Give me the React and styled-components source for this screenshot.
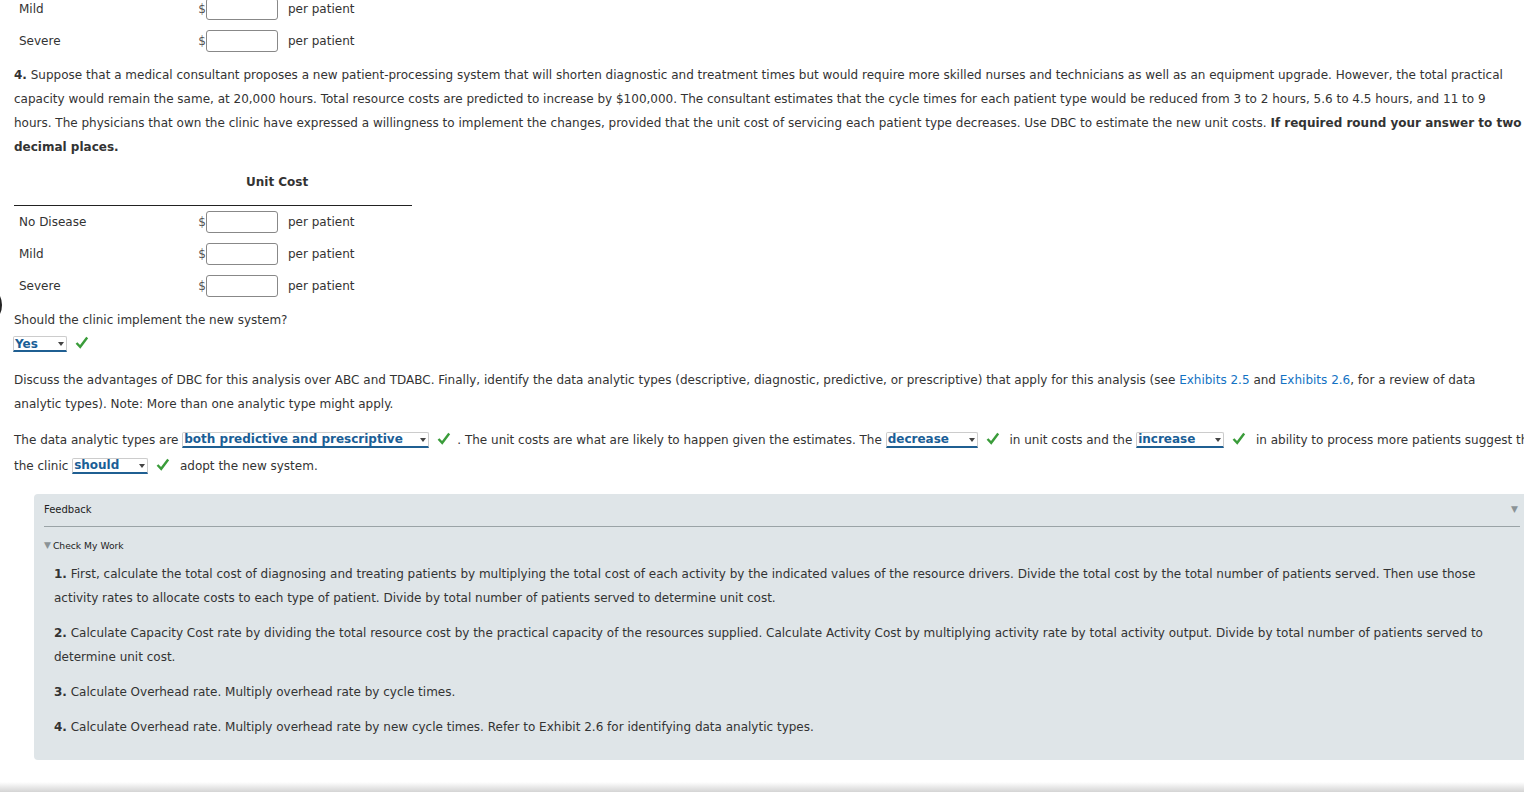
import React from 'react'
import styled, { createGlobalStyle } from 'styled-components'

const GlobalStyle = createGlobalStyle`
  html, body {
    margin: 0;
    padding: 0;
    background: #fff;
    overflow: hidden;
  }
  body {
    font-family: "DejaVu Sans", Verdana, sans-serif;
    font-size: 12px;
    color: #333;
  }
`

const Page = styled.div`
  width: 1560px;
  padding-left: 14px;
  position: relative;
`

const CostTable = styled.div`
  width: 398px;
  margin-top: ${props => props.$top || '0'};
`

const TableHead = styled.div`
  margin-top: 11px;
  padding-bottom: 11px;
  border-bottom: 1px solid #222;
  line-height: 24px;
  font-weight: bold;
  padding-left: 232px;
`

const Row = styled.div`
  display: flex;
  align-items: center;
  height: 32px;
`

const Label = styled.div`
  width: 178px;
  padding-left: 5px;
`

const Dollar = styled.span`
  width: 9px;
  text-align: right;
  color: #555;
`

const CostInput = styled.div`
  width: 70px;
  height: 20px;
  border: 1px solid #888;
  border-radius: 3px;
  background: #fff;
`

const Per = styled.span`
  margin-left: 10px;
`

const Para = styled.p`
  margin: ${props => props.$margin || '0'};
  line-height: ${props => props.$lh || '24px'};
  width: 1560px;
  white-space: nowrap;
`

const Question = styled.div`
  margin-top: 6px;
  line-height: 24px;
`

const Select = styled.span`
  display: inline-flex;
  align-items: center;
  justify-content: space-between;
  box-sizing: border-box;
  width: ${props => props.$w}px;
  height: 16px;
  padding: 0 2px 0 1px;
  background: #fff;
  border: 1px solid #ccc;
  border-bottom: 2px solid #1f5f92;
  border-radius: 2px 2px 0 0;
  color: #1a5e96;
  font-weight: bold;
  line-height: 14px;
  white-space: nowrap;
  vertical-align: 1px;
`

const Caret = styled.span`
  width: 0;
  height: 0;
  border-left: 3px solid transparent;
  border-right: 3px solid transparent;
  border-top: 4px solid #444;
  margin-top: 1px;
`

const CheckWrap = styled.span`
  display: inline-block;
  vertical-align: -1px;
  margin: 0 6px 0 8px;
`

const Link = styled.a`
  color: #1372c3;
  text-decoration: none;
`

const YesLine = styled.div`
  display: flex;
  align-items: center;
  height: 24px;
  margin-left: -1px;
`

const Feedback = styled.div`
  margin: 14px 0 0 20px;
  background: #dfe5e8;
  border-radius: 4px 0 0 4px;
  padding: 8px 0 21px 10px;
  width: 1500px;
`

const FeedbackHead = styled.div`
  display: flex;
  justify-content: space-between;
  font-size: 10px;
  line-height: 15px;
  padding-bottom: 9px;
  border-bottom: 1px solid #9aa3a6;
  width: 1476px;
  color: #222;
`

const Tri = styled.span`
  color: #8b9396;
  font-size: 9px;
  padding-right: 2px;
`

const CheckWork = styled.div`
  font-size: 9.2px;
  line-height: 15px;
  margin-top: 11px;
  color: #222;
  display: flex;
  align-items: center;
`

const Hint = styled.p`
  margin: ${props => props.$first ? '9px' : '11px'} 0 0 10px;
  line-height: 24px;
  width: 1440px;
`

const Circle = styled.div`
  position: absolute;
  left: -40px;
  top: 291px;
  width: 38px;
  height: 38px;
  border: 2px solid #222;
  border-radius: 50%;
`

const BottomShade = styled.div`
  position: fixed;
  left: 0;
  right: 0;
  bottom: 0;
  height: 10px;
  background: linear-gradient(#fff, #d4d4d4);
`

const Check = () => (
  <CheckWrap>
    <svg width="14" height="13" viewBox="0 0 14 13">
      <path d="M1.5 7 L5.2 10.8 L12.2 1.5" fill="none" stroke="#3a9c3a" strokeWidth="2.4" />
    </svg>
  </CheckWrap>
)

const Drop = ({ w, children }) => (
  <Select $w={w}>
    <span>{children}</span>
    <Caret />
  </Select>
)

const CostRow = ({ label }) => (
  <Row>
    <Label>{label}</Label>
    <Dollar>$</Dollar>
    <CostInput />
    <Per>per patient</Per>
  </Row>
)

export default function App() {
  return (
    <>
      <GlobalStyle />
      <Page>
        <Circle />
        <CostTable $top="-7px">
          <CostRow label="Mild" />
          <CostRow label="Severe" />
        </CostTable>

        <Para $margin="6px 0 0">
          <b>4.</b> Suppose that a medical consultant proposes a new patient-processing system that will shorten diagnostic and treatment times but would require more skilled nurses and technicians as well as an equipment upgrade. However, the total practical<br />
          capacity would remain the same, at 20,000 hours. Total resource costs are predicted to increase by $100,000. The consultant estimates that the cycle times for each patient type would be reduced from 3 to 2 hours, 5.6 to 4.5 hours, and 11 to 9<br />
          hours. The physicians that own the clinic have expressed a willingness to implement the changes, provided that the unit cost of servicing each patient type decreases. Use DBC to estimate the new unit costs. <b>If required round your answer to two</b><br />
          <b>decimal places.</b>
        </Para>

        <CostTable>
          <TableHead>Unit Cost</TableHead>
          <CostRow label="No Disease" />
          <CostRow label="Mild" />
          <CostRow label="Severe" />
        </CostTable>

        <Question>Should the clinic implement the new system?</Question>
        <YesLine>
          <Drop w={54}>Yes</Drop>
          <Check />
        </YesLine>

        <Para $margin="12px 0 0">
          Discuss the advantages of DBC for this analysis over ABC and TDABC. Finally, identify the data analytic types (descriptive, diagnostic, predictive, or prescriptive) that apply for this analysis (see <Link>Exhibits 2.5</Link> and <Link>Exhibits 2.6</Link>, for a review of data<br />
          analytic types). Note: More than one analytic type might apply.
        </Para>

        <Para $margin="12px 0 0" $lh="25px">
          The data analytic types are <Drop w={247}>both predictive and prescriptive</Drop><Check />. The unit costs are what are likely to happen given the estimates. The <Drop w={92}>decrease</Drop><Check /> in unit costs and the <Drop w={88}>increase</Drop><Check /> in ability to process more patients suggest that<br />
          the clinic <Drop w={76}>should</Drop><Check /> adopt the new system.
        </Para>

        <Feedback>
          <FeedbackHead>
            <span>Feedback</span>
            <Tri>▼</Tri>
          </FeedbackHead>
          <CheckWork><Tri>▼</Tri>Check My Work</CheckWork>
          <Hint $first>
            <b>1.</b> First, calculate the total cost of diagnosing and treating patients by multiplying the total cost of each activity by the indicated values of the resource drivers. Divide the total cost by the total number of patients served. Then use those activity rates to allocate costs to each type of patient. Divide by total number of patients served to determine unit cost.
          </Hint>
          <Hint>
            <b>2.</b> Calculate Capacity Cost rate by dividing the total resource cost by the practical capacity of the resources supplied. Calculate Activity Cost by multiplying activity rate by total activity output. Divide by total number of patients served to determine unit cost.
          </Hint>
          <Hint>
            <b>3.</b> Calculate Overhead rate. Multiply overhead rate by cycle times.
          </Hint>
          <Hint>
            <b>4.</b> Calculate Overhead rate. Multiply overhead rate by new cycle times. Refer to Exhibit 2.6 for identifying data analytic types.
          </Hint>
        </Feedback>
      </Page>
      <BottomShade />
    </>
  )
}
